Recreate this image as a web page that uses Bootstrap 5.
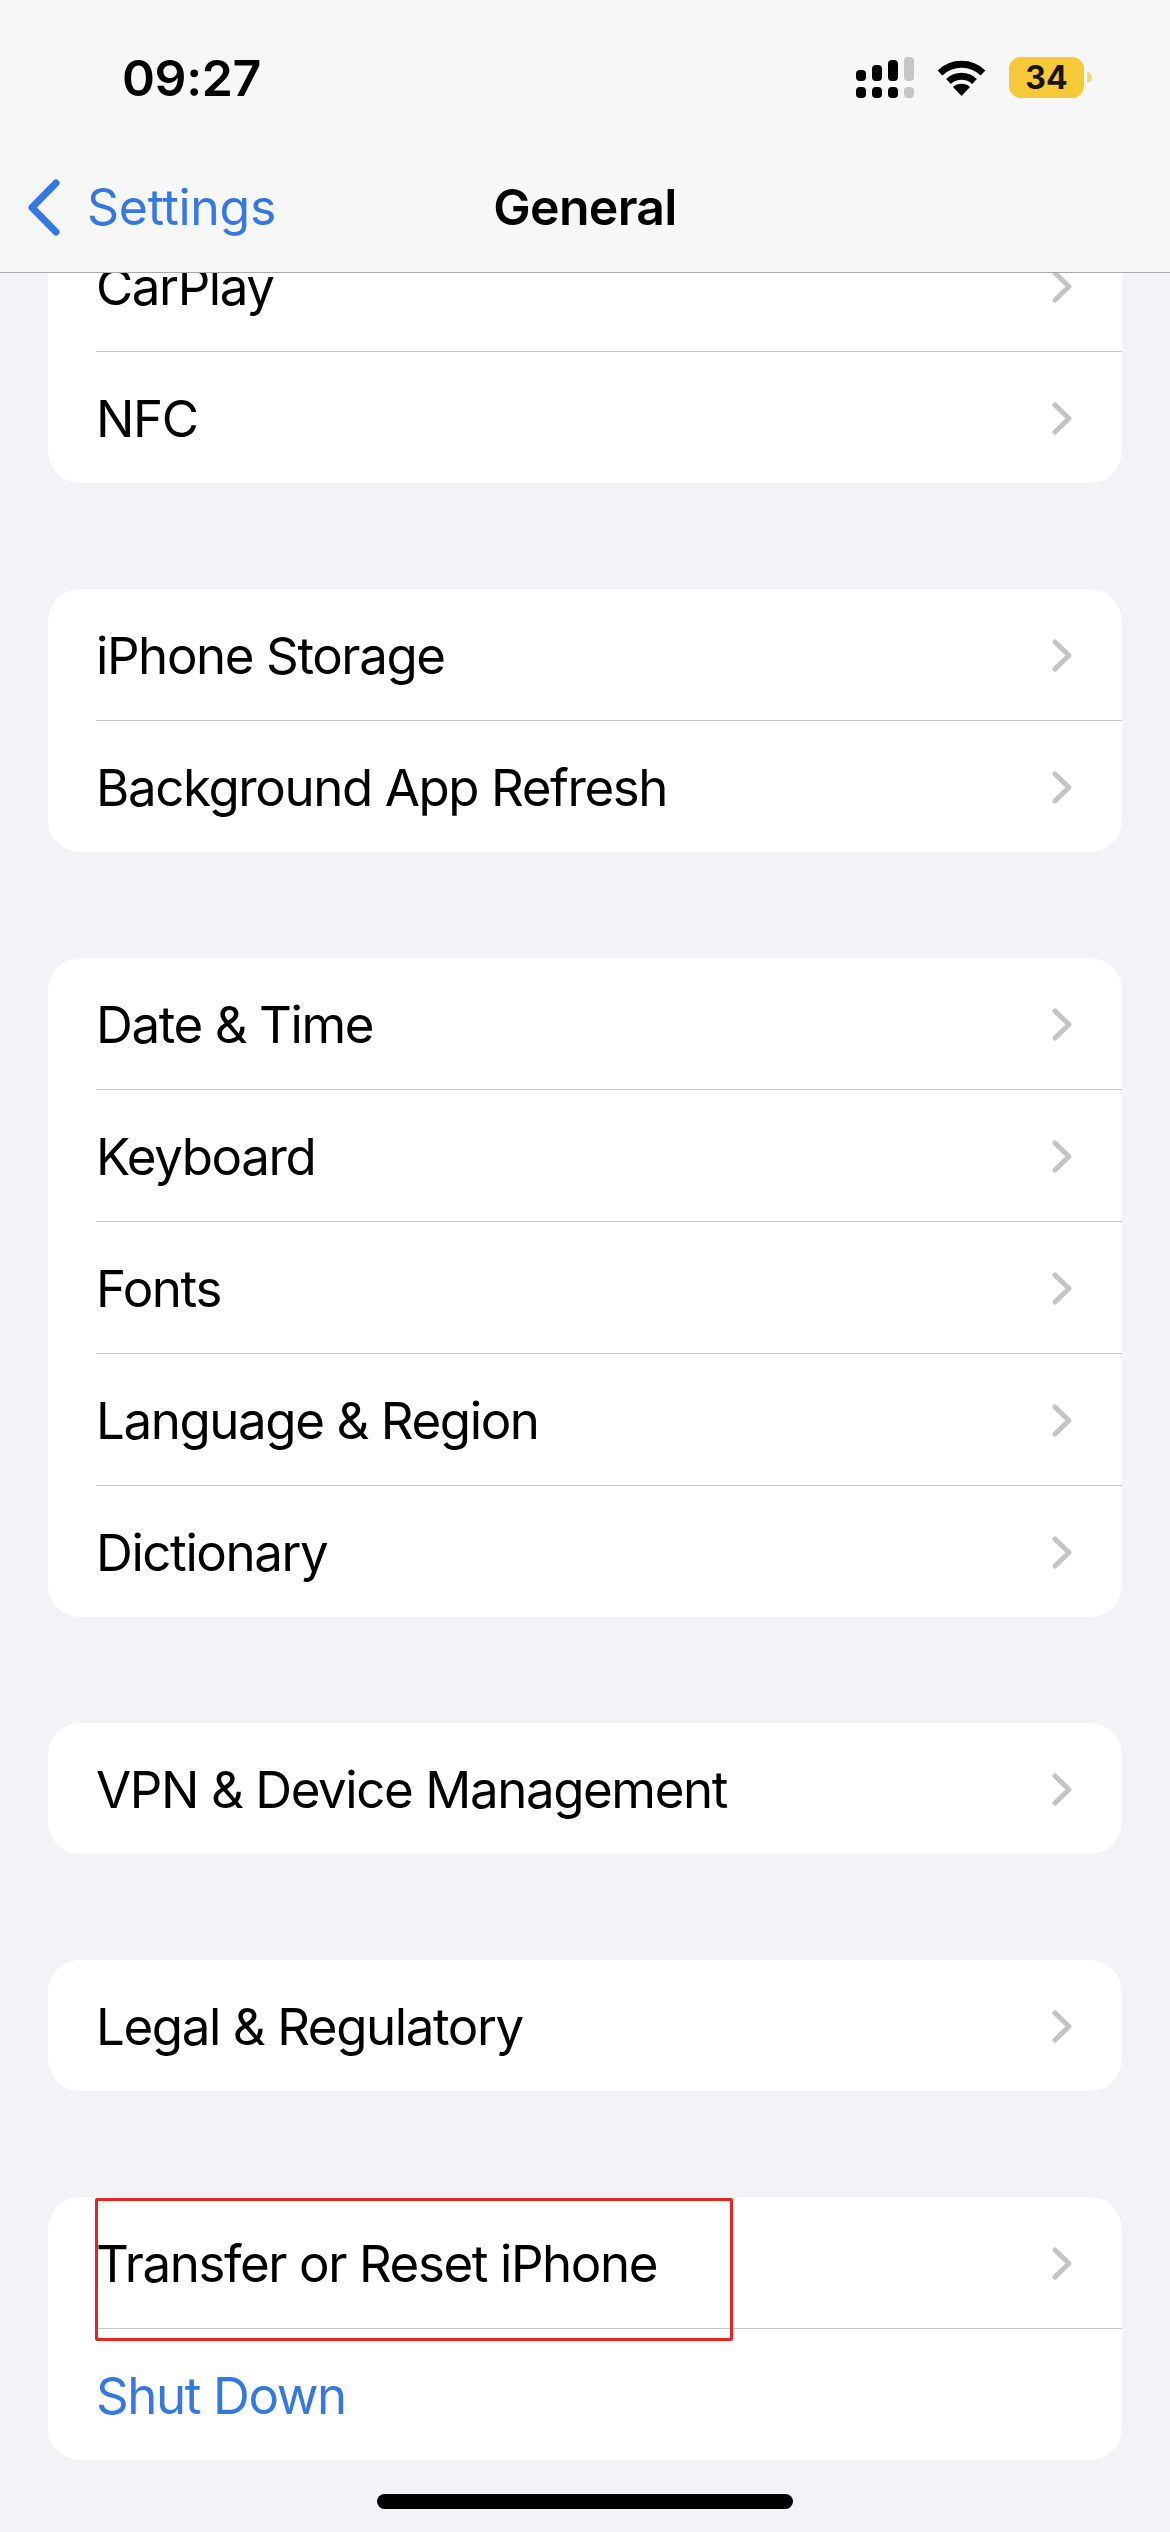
<!DOCTYPE html>
<html lang="en">
<head>
    <meta charset="UTF-8">
    <meta name="viewport" content="width=device-width, initial-scale=1.0">
    <link href="https://cdn.jsdelivr.net/npm/bootstrap@5.3.2/dist/css/bootstrap.min.css" rel="stylesheet" />
    <title>General</title>
    <style>
        body {
            height: 2532px;
            overflow: hidden;
            background-color: #f2f2f7;
            font-family: "Inter", "Liberation Sans", sans-serif;
            color: #000;
        }
        .top-head {
            height: 273px;
            background-color: #f7f7f7;
            border-bottom: 1px solid #a9a9ab;
        }
        .status-row {
            height: 156px;
            padding: 55px 78px 0 122px;
        }
        .clock {
            font-size: 50px;
            font-weight: 600;
            line-height: 46px;
            letter-spacing: -0.4px;
        }
        .status-icons {
            gap: 23px;
            margin-top: 2px;
        }
        .battery {
            width: 75px;
            height: 41px;
            border-radius: 12px;
            background-color: #f5c938;
            font-size: 32px;
            font-weight: 700;
            color: #1a1408;
            line-height: 1;
        }
        .battery-nub {
            width: 5px;
            height: 11px;
            margin-left: 3px;
            border-radius: 0 6px 6px 0;
            background-color: #f0d77e;
        }
        .title-row {
            display: grid;
            grid-template-columns: 1fr auto 1fr;
            height: 102px;
            padding: 0 28px;
        }
        .back-link {
            gap: 27px;
            color: #3478e6;
            font-size: 50px;
            letter-spacing: -0.3px;
            text-decoration: none;
        }
        .page-title {
            font-size: 50px;
            font-weight: 600;
            letter-spacing: -0.7px;
        }
        .cell-group {
            margin: 0 48px 106px;
            border-radius: 32px;
            --bs-list-group-border-width: 0;
            --bs-list-group-color: #000;
        }
        .cell-group .list-group-item {
            padding: 0 0 0 48px;
            font-size: 51px;
            letter-spacing: -1.4px;
            line-height: 1;
        }
        .cell-inner {
            height: 131px;
            padding: 2px 50px 0 0;
        }
        .list-group-item + .list-group-item .cell-inner {
            height: 132px;
            border-top: 1px solid #c8c8ca;
        }
        .cell-clipped {
            height: 78px;
            overflow: hidden;
        }
        .cell-clipped .cell-inner {
            height: 131px;
            margin-top: -53px;
        }
        .cell-group .cell-clipped {
            border-radius: 0;
        }
        .cell-group-scrolled {
            border-top-left-radius: 0;
            border-top-right-radius: 0;
        }
        .cell-blue {
            color: #3478e0;
        }
        .red-frame {
            top: 1px;
            left: 95px;
            width: 638px;
            height: 143px;
            border: 3px solid #e8261f;
            border-radius: 2px;
        }
        .home-bar {
            width: 416px;
            height: 15px;
            margin: -72px auto 0;
            border-radius: 8px;
            background-color: #000;
        }
    </style>
</head>
<body>
    <header class="top-head">
        <div class="status-row d-flex justify-content-between align-items-start">
            <div class="clock">09:27</div>
            <div class="status-icons d-flex align-items-center">
                <svg width="58" height="41" viewBox="0 0 58 41">
                    <rect x="0" y="13" width="10" height="11" rx="4" fill="#000"/>
                    <rect x="16" y="8" width="10" height="16" rx="4" fill="#000"/>
                    <rect x="32" y="3" width="10" height="21" rx="4" fill="#000"/>
                    <rect x="48" y="0" width="10" height="24" rx="4" fill="#c6c6c6"/>
                    <rect x="0" y="30" width="10" height="11" rx="4" fill="#000"/>
                    <rect x="16" y="30" width="10" height="11" rx="4" fill="#000"/>
                    <rect x="32" y="30" width="10" height="11" rx="4" fill="#000"/>
                    <rect x="48" y="30" width="10" height="11" rx="4" fill="#c6c6c6"/>
                </svg>
                <svg width="49" height="37" viewBox="0 0 49 37">
                    <path d="M3 14 A31 31 0 0 1 46 14" fill="none" stroke="#000" stroke-width="7"/>
                    <path d="M11.5 22.5 A19 19 0 0 1 37.500 22.500" fill="none" stroke="#000" stroke-width="7"/>
                    <path d="M24.500 37 L16 28 A13 13 0 0 1 33 28 Z" fill="#000"/>
                </svg>
                <div class="d-flex align-items-center">
                    <div class="battery d-flex align-items-center justify-content-center">34</div>
                    <div class="battery-nub"></div>
                </div>
            </div>
        </div>
        <nav class="title-row align-items-center">
            <a class="back-link d-flex align-items-center" href="#">
                <svg width="32" height="57" viewBox="0 0 32 57">
                    <path d="M28 4 L4 28.500 L28 53" fill="none" stroke="#3478e6" stroke-width="7" stroke-linecap="round" stroke-linejoin="round"/>
                </svg>
                <span>Settings</span>
            </a>
            <div class="page-title">General</div>
            <div></div>
        </nav>
    </header>

    <main>
        <ul class="list-group cell-group cell-group-scrolled">
            <li class="list-group-item cell-clipped">
                <div class="cell-inner d-flex align-items-center justify-content-between">CarPlay
                    <svg width="20" height="33" viewBox="0 0 20 33"><path d="M3 3 L17 16.500 L3 30" fill="none" stroke="#c4c4c7" stroke-width="5" stroke-linecap="round" stroke-linejoin="round"/></svg>
                </div>
            </li>
            <li class="list-group-item">
                <div class="cell-inner d-flex align-items-center justify-content-between">NFC
                    <svg width="20" height="33" viewBox="0 0 20 33"><path d="M3 3 L17 16.500 L3 30" fill="none" stroke="#c4c4c7" stroke-width="5" stroke-linecap="round" stroke-linejoin="round"/></svg>
                </div>
            </li>
        </ul>

        <ul class="list-group cell-group">
            <li class="list-group-item">
                <div class="cell-inner d-flex align-items-center justify-content-between">iPhone Storage
                    <svg width="20" height="33" viewBox="0 0 20 33"><path d="M3 3 L17 16.500 L3 30" fill="none" stroke="#c4c4c7" stroke-width="5" stroke-linecap="round" stroke-linejoin="round"/></svg>
                </div>
            </li>
            <li class="list-group-item">
                <div class="cell-inner d-flex align-items-center justify-content-between">Background App Refresh
                    <svg width="20" height="33" viewBox="0 0 20 33"><path d="M3 3 L17 16.500 L3 30" fill="none" stroke="#c4c4c7" stroke-width="5" stroke-linecap="round" stroke-linejoin="round"/></svg>
                </div>
            </li>
        </ul>

        <ul class="list-group cell-group">
            <li class="list-group-item">
                <div class="cell-inner d-flex align-items-center justify-content-between">Date &amp; Time
                    <svg width="20" height="33" viewBox="0 0 20 33"><path d="M3 3 L17 16.500 L3 30" fill="none" stroke="#c4c4c7" stroke-width="5" stroke-linecap="round" stroke-linejoin="round"/></svg>
                </div>
            </li>
            <li class="list-group-item">
                <div class="cell-inner d-flex align-items-center justify-content-between">Keyboard
                    <svg width="20" height="33" viewBox="0 0 20 33"><path d="M3 3 L17 16.500 L3 30" fill="none" stroke="#c4c4c7" stroke-width="5" stroke-linecap="round" stroke-linejoin="round"/></svg>
                </div>
            </li>
            <li class="list-group-item">
                <div class="cell-inner d-flex align-items-center justify-content-between">Fonts
                    <svg width="20" height="33" viewBox="0 0 20 33"><path d="M3 3 L17 16.500 L3 30" fill="none" stroke="#c4c4c7" stroke-width="5" stroke-linecap="round" stroke-linejoin="round"/></svg>
                </div>
            </li>
            <li class="list-group-item">
                <div class="cell-inner d-flex align-items-center justify-content-between">Language &amp; Region
                    <svg width="20" height="33" viewBox="0 0 20 33"><path d="M3 3 L17 16.500 L3 30" fill="none" stroke="#c4c4c7" stroke-width="5" stroke-linecap="round" stroke-linejoin="round"/></svg>
                </div>
            </li>
            <li class="list-group-item">
                <div class="cell-inner d-flex align-items-center justify-content-between">Dictionary
                    <svg width="20" height="33" viewBox="0 0 20 33"><path d="M3 3 L17 16.500 L3 30" fill="none" stroke="#c4c4c7" stroke-width="5" stroke-linecap="round" stroke-linejoin="round"/></svg>
                </div>
            </li>
        </ul>

        <ul class="list-group cell-group">
            <li class="list-group-item">
                <div class="cell-inner d-flex align-items-center justify-content-between">VPN &amp; Device Management
                    <svg width="20" height="33" viewBox="0 0 20 33"><path d="M3 3 L17 16.500 L3 30" fill="none" stroke="#c4c4c7" stroke-width="5" stroke-linecap="round" stroke-linejoin="round"/></svg>
                </div>
            </li>
        </ul>

        <ul class="list-group cell-group">
            <li class="list-group-item">
                <div class="cell-inner d-flex align-items-center justify-content-between">Legal &amp; Regulatory
                    <svg width="20" height="33" viewBox="0 0 20 33"><path d="M3 3 L17 16.500 L3 30" fill="none" stroke="#c4c4c7" stroke-width="5" stroke-linecap="round" stroke-linejoin="round"/></svg>
                </div>
            </li>
        </ul>

        <div class="position-relative">
            <ul class="list-group cell-group">
                <li class="list-group-item">
                    <div class="cell-inner d-flex align-items-center justify-content-between">Transfer or Reset iPhone
                        <svg width="20" height="33" viewBox="0 0 20 33"><path d="M3 3 L17 16.500 L3 30" fill="none" stroke="#c4c4c7" stroke-width="5" stroke-linecap="round" stroke-linejoin="round"/></svg>
                    </div>
                </li>
                <li class="list-group-item">
                    <div class="cell-inner d-flex align-items-center cell-blue">Shut Down</div>
                </li>
            </ul>
            <div class="red-frame position-absolute"></div>
        </div>

        <div class="home-bar"></div>
    </main>
</body>
</html>
